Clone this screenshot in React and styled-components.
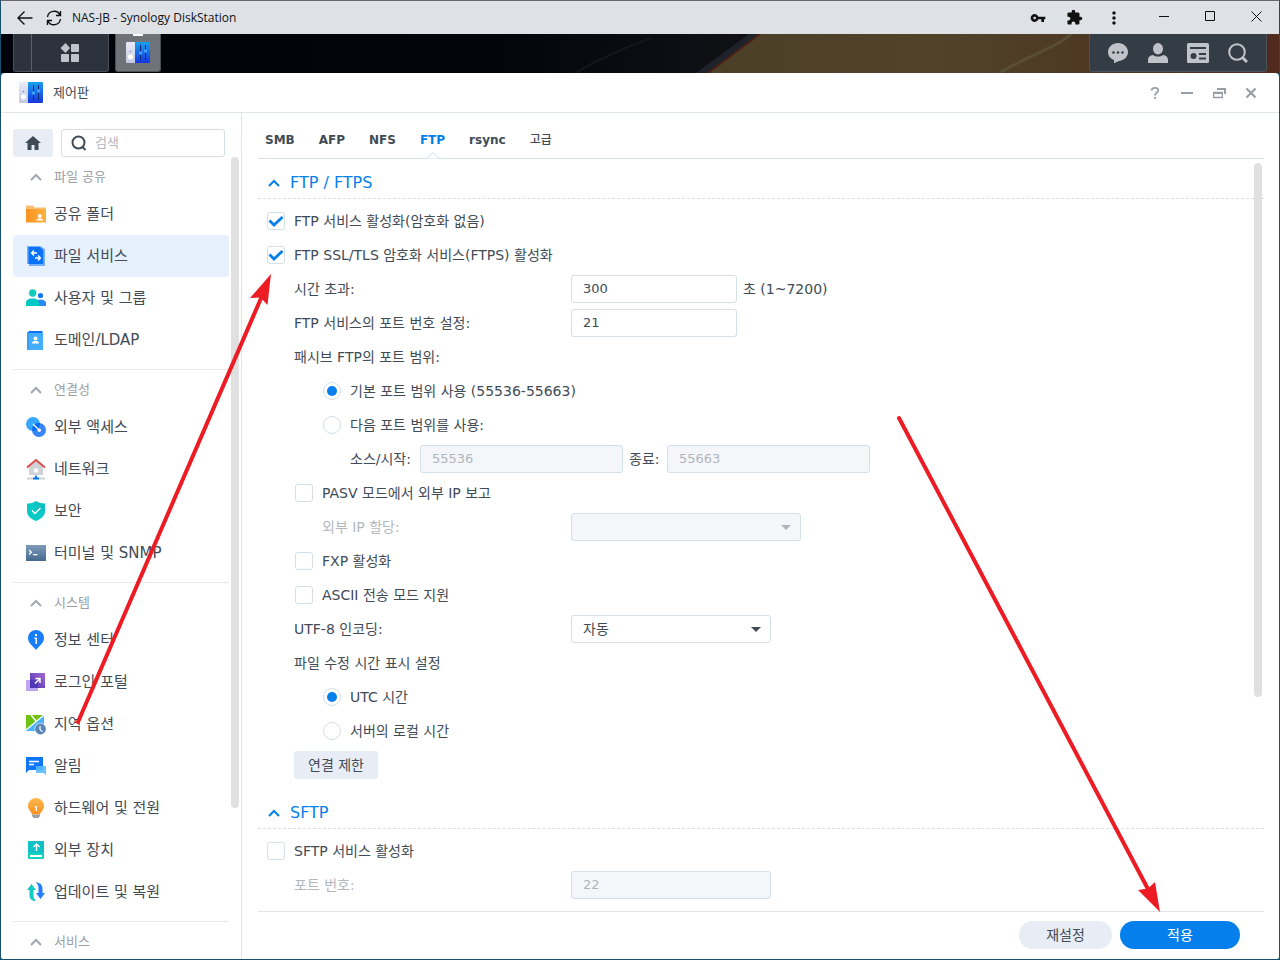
import React, { useState } from "react";
import styled, { createGlobalStyle, css } from "styled-components";
import { MdVpnKey, MdExtension, MdMoreVert } from "react-icons/md";

const GlobalStyle = createGlobalStyle`
  *, *::before, *::after {
    box-sizing: border-box;
  }
  body {
    margin: 0;
    color: #414b55;
    font: 13px/28px "DejaVu Sans", "Noto Sans CJK KR", sans-serif;
  }
  button, input, select {
    margin: 0;
    color: inherit;
    font: inherit;
  }
`;

const Screen = styled.div`
  position: relative;
  display: flex;
  flex-direction: column;
  height: 100vh;
  overflow: hidden;
  border: 1px solid #17506f;
  border-top-color: #66676b;
  background: #17506f;
`;

const PlainButton = styled.button`
  display: flex;
  align-items: center;
  justify-content: center;
  padding: 0;
  border: 0;
  background: none;
`;

/* browser title bar */

const TitleBar = styled.header`
  display: flex;
  flex: none;
  align-items: center;
  height: 33px;
  padding-left: 16px;
  background: #dee1e6;
  color: #111;
`;

const PageTitle = styled.div`
  flex: 1;
  margin-left: 10px;
  font: 12px/32px "Open Sans", sans-serif;
`;

const NavButton = styled(PlainButton)`
  width: 16px;
  height: 32px;
  & + & {
    margin-left: 13px;
  }
`;

const BrowserTools = styled.div`
  display: flex;
  margin-right: 5px;
`;

const BrowserTool = styled(PlainButton)`
  width: ${(p) => p.$width || 36}px;
  height: 32px;
`;

const CaptionButton = styled(PlainButton)`
  width: 46px;
  height: 32px;
  padding-bottom: 3px;
`;

/* DSM task bar */

const TaskBar = styled.nav`
  position: relative;
  display: flex;
  flex: none;
  gap: 6px;
  height: 39px;
  padding: 0 12px;
  background: #02040b;
`;

const Wallpaper = styled.svg`
  position: absolute;
  inset: 0;
  width: 100%;
  height: 100%;
`;

const TaskGroup = styled.div`
  position: relative;
  display: flex;
  height: 38px;
  border: 1px solid #4b5158;
  border-top: 0;
  border-radius: 0 0 3px 3px;
  background: ${(p) => p.$background};
`;

const DesktopToggle = styled(PlainButton)`
  width: 18px;
  border-right: 1px solid #5a6068;
`;

const AppsButton = styled(PlainButton)`
  width: 76px;
`;

const RunningApp = styled(PlainButton)`
  width: 44px;
  &::before {
    position: absolute;
    top: 0;
    width: 10px;
    height: 2px;
    background: #fff;
    content: "";
  }
`;

const Tray = styled(TaskGroup)`
  margin-left: auto;
  padding: 0 8px;
`;

const TrayButton = styled(PlainButton)`
  width: 40px;
`;

/* control panel window */

const Window = styled.main`
  display: flex;
  flex: 1;
  flex-direction: column;
  min-height: 0;
  border-radius: 4px 4px 2px 2px;
  background: #fff;
`;

const WindowHeader = styled.div`
  display: flex;
  flex: none;
  align-items: center;
  height: 40px;
  padding: 0 12px 0 18px;
  border-bottom: 1px solid #dfe6ed;
`;

const WindowTitle = styled.h1`
  flex: 1;
  margin: 0 0 0 10px;
  font-size: 13px;
  font-weight: 400;
`;

const WindowButton = styled(PlainButton)`
  width: 32px;
  height: 32px;
`;

const Columns = styled.div`
  display: flex;
  flex: 1;
  min-height: 0;
`;

const Sidebar = styled.aside`
  position: relative;
  display: flex;
  flex: none;
  flex-direction: column;
  width: 241px;
  padding: 16px 12px 0;
  overflow: hidden;
  border-right: 1px solid #dfe3e8;
`;

const SearchRow = styled.div`
  display: flex;
  flex: none;
  gap: 8px;
  padding-right: 4px;
`;

const HomeButton = styled(PlainButton)`
  flex: none;
  width: 40px;
  height: 28px;
  border-radius: 3px;
  background: #e8ecf4;
`;

const SearchBox = styled.label`
  display: flex;
  flex: 1;
  align-items: center;
  gap: 8px;
  min-width: 0;
  height: 28px;
  padding: 0 9px;
  border: 1px solid #d3dee8;
  border-radius: 3px;
`;

const SearchInput = styled.input`
  flex: 1;
  min-width: 0;
  padding: 0;
  border: 0;
  outline: 0;
  line-height: 24px;
  &::placeholder {
    color: #b4b8bd;
  }
`;

const MenuGroup = styled.section`
  flex: none;
  & + & {
    margin-top: 8px;
    border-top: 1px solid #e6eaef;
  }
`;

const rowLayout = css`
  display: flex;
  align-items: center;
  width: 100%;
  gap: 8px;
  padding: 0 13px;
  border: 0;
  text-align: left;
`;

const GroupHeader = styled.button`
  ${rowLayout}
  height: 36px;
  padding-top: 4px;
  background: none;
  color: #999ea5;
`;

const MenuItem = styled.button`
  ${rowLayout}
  height: 42px;
  border-radius: 4px;
  background: ${(p) => (p.$active ? "#e6f1fd" : "none")};
  font-size: 15px;
`;

const IconBox = styled.span`
  display: flex;
  flex: none;
  justify-content: center;
  width: 20px;
`;

const ScrollThumb = styled.div`
  position: absolute;
  top: ${(p) => p.$top}px;
  right: 2px;
  width: 8px;
  height: ${(p) => p.$length};
  border-radius: 4px;
  background: #e0e0e0;
`;

/* file services page */

const Content = styled.div`
  display: flex;
  flex: 1;
  flex-direction: column;
  min-width: 0;
  padding: 0 15px 0 16px;
`;

const Tabs = styled.div`
  display: flex;
  flex: none;
  gap: 24px;
  height: 46px;
  padding: 0 7px;
  border-bottom: 1px solid #d3dfe9;
`;

const Tab = styled.button`
  position: relative;
  padding: 8px 0 0;
  border: 0;
  background: none;
  color: ${(p) => (p.$active ? "#057feb" : "#414b55")};
  font-size: 12px;
  font-weight: ${(p) => (p.$light ? 500 : 700)};
`;

const TabNotch = styled.svg`
  position: absolute;
  bottom: -1px;
  left: calc(50% - 7px);
`;

const ScrollArea = styled.div`
  position: relative;
  flex: 1;
  min-height: 0;
  padding-top: 9px;
  overflow: hidden;
`;

const Section = styled.section`
  & + & {
    margin-top: 19px;
  }
`;

const SectionTitle = styled.h2`
  margin: 0 0 8px;
  border-bottom: 1px dashed #d3dfe9;
  font-size: 16px;
  font-weight: 400;
`;

const SectionToggle = styled.button`
  display: flex;
  align-items: center;
  gap: 10px;
  width: 100%;
  height: 30px;
  padding: 0 10px;
  border: 0;
  background: none;
  color: #057feb;
`;

const Rows = styled.div`
  display: flex;
  flex-direction: column;
  gap: 6px;
  font-size: 14px;
`;

const Row = styled.div`
  display: flex;
  align-items: center;
  gap: 6px;
  height: 28px;
  padding-left: ${(p) => p.$indent}px;
`;

const FieldLabel = styled.label`
  flex: none;
  width: ${(p) => p.$width}px;
  margin-right: -6px;
  color: ${(p) => (p.$disabled ? "#b3b8be" : "inherit")};
`;

const Choice = styled.label`
  display: flex;
  align-items: center;
  gap: 9px;
`;

const Mark = styled.span`
  position: relative;
  display: flex;
  width: 18px;
  height: 18px;
  svg {
    position: absolute;
    inset: 0;
    pointer-events: none;
  }
`;

const ChoiceInput = styled.input`
  width: 18px;
  height: 18px;
  appearance: none;
  border: 1px solid #d3dfe9;
  border-radius: ${(p) => (p.type === "radio" ? "50%" : "3px")};
  background: #fff;
`;

const field = css`
  height: 28px;
  padding: 0 11px;
  border: 1px solid #d3dfe9;
  border-radius: 3px;
  outline: 0;
  background: #fff;
  &:disabled {
    background: #f4f6fa;
    color: #b0b5bc;
    opacity: 1;
  }
`;

const TextInput = styled.input`
  ${field}
  width: ${(p) => p.$width}px;
  font-size: 13px;
`;

const SelectBox = styled.div`
  position: relative;
  width: ${(p) => p.$width}px;
  height: 28px;
  svg {
    position: absolute;
    top: 12px;
    right: 10px;
    pointer-events: none;
  }
`;

const SelectInput = styled.select`
  ${field}
  width: 100%;
  appearance: none;
  line-height: 24px;
`;

const SmallButton = styled.button`
  height: 28px;
  padding: 0 14px;
  border: 0;
  border-radius: 3px;
  background: #e8ecf4;
`;

const Footer = styled.footer`
  display: flex;
  flex: none;
  justify-content: flex-end;
  gap: 8px;
  padding: 9px 24px 10px;
  border-top: 1px solid #e1e4e8;
`;

const PillButton = styled.button`
  width: ${(p) => (p.$primary ? 120 : 93)}px;
  height: 28px;
  padding: 0;
  border: 0;
  border-radius: 14px;
  background: ${(p) => (p.$primary ? "#057feb" : "#e8ecf4")};
  color: ${(p) => (p.$primary ? "#fff" : "#414b55")};
  font-size: 14px;
`;

const Arrows = styled.svg`
  position: absolute;
  top: -1px;
  left: -1px;
  width: 1280px;
  height: 960px;
  pointer-events: none;
`;

/* icons */

const ChevronUp = ({ color = "#a3a8ae", width = 2 }) => (
  <svg width="12" height="8" viewBox="0 0 12 8" fill="none" stroke={color} strokeWidth={width}>
    <path d="M1 7l5-5 5 5" />
  </svg>
);

const Caret = ({ color }) => (
  <svg width="10" height="5" viewBox="0 0 10 5" fill={color}>
    <path d="M0 0h10L5 5z" />
  </svg>
);

const PanelIcon = ({ id }) => (
  <svg width="24" height="22" viewBox="0 0 24 22">
    <defs>
      <linearGradient id={`${id}b`} x1="0" y1="0" x2="0" y2="1">
        <stop offset="0" stopColor="#17a0ee" />
        <stop offset="1" stopColor="#1736de" />
      </linearGradient>
      <linearGradient id={`${id}w`} x1="0" y1="0" x2="0" y2="1">
        <stop offset="0" stopColor="#e9ebfb" />
        <stop offset="1" stopColor="#c3c8e2" />
      </linearGradient>
    </defs>
    <path d="M1 0h8v21H1a1 1 0 0 1-1-1V1a1 1 0 0 1 1-1z" fill={`url(#${id}w)`} />
    <path d="M9 0h14a1 1 0 0 1 1 1v19a1 1 0 0 1-1 1H9z" fill={`url(#${id}b)`} />
    <circle cx="4.5" cy="9.5" r=".6" fill="#555b78" />
    <circle cx="4.5" cy="14.8" r="2.600" fill="#fff" />
    <path d="M14.500 3v15M19.500 3v15" stroke="#102a78" strokeWidth="1" />
    <circle cx="14.500" cy="11" r="1.700" fill="#44a2ff" />
    <circle cx="19.500" cy="9" r="1.700" fill="#44a2ff" />
  </svg>
);

const menuIcons = {
  folder: (
    <>
      <path d="M0 1.500h7l1.500 2H20V8H0z" fill="#f9bd78" />
      <path d="M0 5h20v13.500H0z" fill="url(#orange)" />
      <circle cx="13.800" cy="12" r="2" fill="#fff" />
      <path d="M10.300 16.500c0-1.500 1.500-2 3.500-2s3.300.5 3.300 2z" fill="#fff" />
    </>
  ),
  file: (
    <>
      <path d="M1 0h13l5 3v17H3V18H1z" fill="#77aefb" />
      <path d="M2.500 1H14l3.200 3v14H2.500z" fill="#0972fb" />
      <path d="M8 4.500L5.500 7 8 9.500M5.500 7H11M12 9.500l2.500 2.500L12 14.500M14.500 12H9" fill="none" stroke="#fff" strokeWidth="1.300" />
    </>
  ),
  users: (
    <>
      <circle cx="14.500" cy="7.500" r="2.600" fill="#1677f5" />
      <path d="M10 18v-3c0-2.500 2-3.500 4.500-3.500S20 12.700 20 15v3z" fill="#2b87fa" />
      <circle cx="6.700" cy="5" r="3.700" fill="#16cbbd" />
      <path d="M0 18v-3c0-3 2-4.500 6.500-4.500S13 12 13 15v3z" fill="#02c8c5" />
    </>
  ),
  domain: (
    <>
      <path d="M2.500 1h14v3h-14z" fill="#0a6ff0" />
      <path d="M2 3h15v17H2z" fill="#45adfd" />
      <path d="M1 2h2v18H1z" fill="#3b9cf8" />
      <circle cx="9.500" cy="8.500" r="1.900" fill="#fff" />
      <path d="M6 13.500c0-2 1.500-2.500 3.500-2.500s3.500.5 3.500 2.500z" fill="#fff" />
    </>
  ),
  access: (
    <>
      <circle cx="7" cy="7" r="7" fill="#36a9fd" />
      <circle cx="13" cy="13" r="7" fill="#3786fb" />
      <path d="M6.500 10.500a7 7 0 0 1 7.500-4.400 7 7 0 0 1-7.700 7.900z" fill="#046cf5" />
      <path d="M7 7l6 6" stroke="#fff" strokeWidth="1.300" />
      <circle cx="13.300" cy="13.300" r="1.700" fill="#fff" />
    </>
  ),
  network: (
    <>
      <path d="M3 7l7-6 7 6v9H3z" fill="#cfd3d7" />
      <path d="M1 8.500L10 1l9 7.500" fill="none" stroke="#d9504d" strokeWidth="2" />
      <rect x="7.800" y="9.500" width="4.400" height="4" rx="1" fill="#fff" />
      <path d="M1 18.500h18v2H1z" fill="#ced2d7" />
      <path d="M7 18.500h2v-2h2v2h2v2H7z" fill="#0878fb" />
    </>
  ),
  shield: (
    <>
      <path d="M10 0c3 2 6 2.500 9 2.500V10c0 5-4 8-9 10-5-2-9-5-9-10V2.500C4 2.500 7 2 10 0z" fill="#07c9c6" />
      <path d="M10 0c3 2 6 2.500 9 2.500V10H10z" fill="#13b9bb" opacity=".5" />
      <path d="M6 9.500l3 3 5.500-5.500" fill="none" stroke="#fff" strokeWidth="1.500" />
    </>
  ),
  terminal: (
    <>
      <path d="M0 2h20v16H0z" fill="url(#steel)" />
      <path d="M3 7l2.500 2.200L3 11.500M7 11.700h4.500" fill="none" stroke="#fff" strokeWidth="1.200" />
    </>
  ),
  info: (
    <>
      <path d="M10 0a8 8 0 0 1 8 8c0 5-5 8-8 12C7 16 2 13 2 8a8 8 0 0 1 8-8z" fill="#177dfc" />
      <path d="M9 4h2v2H9zM8.500 7.500H11V14H9.500V9h-1z" fill="#fff" />
    </>
  ),
  portal: (
    <>
      <path d="M0 8h12v11H0z" fill="#bda5f2" />
      <path d="M4 1h15v15H4z" fill="url(#violet)" />
      <path d="M4 8h8v8H4z" fill="#4a36b5" opacity=".7" />
      <path d="M9 11.500L13.500 7M9.500 6.500H14V11" fill="none" stroke="#fff" strokeWidth="1.400" />
    </>
  ),
  region: (
    <>
      <path d="M0 1h18v16H0z" fill="#48b3fb" />
      <path d="M0 1h17L0 16z" fill="#6ec310" />
      <path d="M18 1L0 16M5 1l5 6" fill="none" stroke="#fff" strokeWidth="1.300" />
      <circle cx="14.500" cy="15" r="6" fill="#fff" />
      <circle cx="14.500" cy="15" r="5.400" fill="#5884b4" />
      <path d="M14 12v3.300l2.500 2.500" fill="none" stroke="#fff" strokeWidth="1.200" />
    </>
  ),
  notice: (
    <>
      <path d="M0 1h17v13H3l-3 3z" fill="#0d76fb" />
      <path d="M3 5.500h10M3 8.500h5" stroke="#fff" strokeWidth="1.300" />
      <path d="M10 10h10v9l-2.500-2H10z" fill="#58b9fd" opacity=".9" />
    </>
  ),
  bulb: (
    <>
      <path d="M10 0a8 8 0 0 1 8 8c0 4-3.500 5.500-4 8.500H6C5.500 13.500 2 12 2 8a8 8 0 0 1 8-8z" fill="url(#bulbfill)" />
      <path d="M6 16.500h8v1.500l-1.500 2h-5L6 18z" fill="#9da2a8" />
      <path d="M8.800 8.600h1.500V13" fill="none" stroke="#fff" strokeWidth="1.300" />
    </>
  ),
  device: (
    <>
      <path d="M2 1h16v12H2z" fill="#10c2c5" />
      <path d="M2 13h16v6H2z" fill="#10d3c5" />
      <path d="M10.500 11V4.500M7.500 7l3-3 3 3" fill="none" stroke="#fff" strokeWidth="1.400" />
      <path d="M4 15h12v2H4z" fill="#fff" />
    </>
  ),
  update: (
    <>
      <path d="M5.500 2L10 8H7.500v5c0 3 1 4.500 2.500 6-4 0-6.500-2-6.500-6V8H1z" fill="#12c8c4" />
      <path d="M14.500 17L19 11h-2.500V7c0-4-2-6.500-7-6.500 2 1 3 3 3 5.500v5H10z" fill="#237efb" />
    </>
  ),
};

const MenuIcon = ({ name }) => (
  <svg width="20" height="20" viewBox="0 0 20 20" overflow="visible">
    <defs>
      <linearGradient id="orange">
        <stop offset="0" stopColor="#fb9223" />
        <stop offset="1" stopColor="#fdb33b" />
      </linearGradient>
      <linearGradient id="steel" x1="0" y1="0" x2="0" y2="1">
        <stop offset="0" stopColor="#7e9bb9" />
        <stop offset="1" stopColor="#46688d" />
      </linearGradient>
      <linearGradient id="violet" x1="0" y1="1" x2="1" y2="0">
        <stop offset="0" stopColor="#4b31af" />
        <stop offset="1" stopColor="#a36ad3" />
      </linearGradient>
      <linearGradient id="bulbfill" x1="0" y1="0" x2="0" y2="1">
        <stop offset="0" stopColor="#fbba51" />
        <stop offset="1" stopColor="#fb8f1f" />
      </linearGradient>
    </defs>
    {menuIcons[name]}
  </svg>
);

const menu = [
  {
    title: "파일 공유",
    items: [
      ["folder", "공유 폴더"],
      ["file", "파일 서비스"],
      ["users", "사용자 및 그룹"],
      ["domain", "도메인/LDAP"],
    ],
  },
  {
    title: "연결성",
    items: [
      ["access", "외부 액세스"],
      ["network", "네트워크"],
      ["shield", "보안"],
      ["terminal", "터미널 및 SNMP"],
    ],
  },
  {
    title: "시스템",
    items: [
      ["info", "정보 센터"],
      ["portal", "로그인 포털"],
      ["region", "지역 옵션"],
      ["notice", "알림"],
      ["bulb", "하드웨어 및 전원"],
      ["device", "외부 장치"],
      ["update", "업데이트 및 복원"],
    ],
  },
  { title: "서비스", items: [] },
];

const tabs = ["SMB", "AFP", "NFS", "FTP", "rsync", "고급"];

function Check({ indent, children, defaultChecked = false }) {
  const [checked, setChecked] = useState(defaultChecked);
  return (
    <Row $indent={indent}>
      <Choice>
        <Mark>
          <ChoiceInput type="checkbox" checked={checked} onChange={() => setChecked(!checked)} />
          {checked && (
            <svg width="18" height="18" viewBox="0 0 18 18" fill="none" stroke="#057feb" strokeWidth="2.800">
              <path d="M2.500 8.500l4.500 4.500L15.500 5" />
            </svg>
          )}
        </Mark>
        {children}
      </Choice>
    </Row>
  );
}

function Radio({ name, value, current, onPick, children }) {
  return (
    <Row $indent={65}>
      <Choice>
        <Mark>
          <ChoiceInput type="radio" name={name} checked={current === value} onChange={() => onPick(value)} />
          {current === value && (
            <svg width="18" height="18" viewBox="0 0 18 18" fill="#057feb">
              <circle cx="9" cy="9" r="5" />
            </svg>
          )}
        </Mark>
        {children}
      </Choice>
    </Row>
  );
}

function FormSection({ title, children }) {
  return (
    <Section>
      <SectionTitle>
        <SectionToggle>
          <ChevronUp color="#057feb" />
          {title}
        </SectionToggle>
      </SectionTitle>
      <Rows>{children}</Rows>
    </Section>
  );
}

function BrowserBar() {
  return (
    <TitleBar>
      <NavButton aria-label="Back">
        <svg width="16" height="16" viewBox="0 0 16 16" fill="none" stroke="#111" strokeWidth="1.400">
          <path d="M15.500 8H1M7.500 1.500L1 8l6.500 6.500" />
        </svg>
      </NavButton>
      <NavButton aria-label="Reload">
        <svg width="16" height="16" viewBox="0 0 16 16" fill="none" stroke="#111" strokeWidth="1.400">
          <path d="M1.500 7A6.600 6.600 0 0 1 14 5M14.500 1v4.500H10M14.500 9A6.600 6.600 0 0 1 2 11M1.500 15v-4.500H6" />
        </svg>
      </NavButton>
      <PageTitle>NAS-JB - Synology DiskStation</PageTitle>
      <BrowserTools>
        <BrowserTool aria-label="Passwords">
          <MdVpnKey size={16} />
        </BrowserTool>
        <BrowserTool aria-label="Extensions">
          <MdExtension size={17} />
        </BrowserTool>
        <BrowserTool aria-label="More" $width={44}>
          <MdMoreVert size={20} />
        </BrowserTool>
      </BrowserTools>
      <CaptionButton aria-label="Minimize">
        <svg width="10" height="10" stroke="#111">
          <path d="M0 5.500h10" />
        </svg>
      </CaptionButton>
      <CaptionButton aria-label="Maximize">
        <svg width="10" height="10" stroke="#111" fill="none">
          <path d="M.5.5h9v9h-9z" />
        </svg>
      </CaptionButton>
      <CaptionButton aria-label="Close">
        <svg width="11" height="11" stroke="#111">
          <path d="M.5.5l10 10M10.500.5l-10 10" />
        </svg>
      </CaptionButton>
    </TitleBar>
  );
}

function DesktopBar() {
  return (
    <TaskBar>
      <Wallpaper viewBox="0 0 1278 39" preserveAspectRatio="xMaxYMid slice">
        <defs>
          <linearGradient id="night">
            <stop offset="0" stopColor="#01030b" />
            <stop offset=".65" stopColor="#02050c" />
            <stop offset="1" stopColor="#121216" />
          </linearGradient>
          <linearGradient id="planet">
            <stop offset="0" stopColor="#4c3f27" />
            <stop offset=".4" stopColor="#50432a" />
            <stop offset=".65" stopColor="#4e3925" />
            <stop offset="1" stopColor="#512a1e" />
          </linearGradient>
        </defs>
        <path d="M0 0h762v39H0z" fill="url(#night)" />
        <path d="M748 0h12l-53 39h-12z" fill="#1e222a" />
        <path d="M759 0h519v39H707z" fill="url(#planet)" />
        <path d="M759 0l-52 39" stroke="#4c2014" strokeWidth="2" />
        <path d="M1070 0c-12 12-35 18-72 39" stroke="#646043" strokeWidth="3" fill="none" opacity=".5" />
        <path d="M650 4c-28 10-50 20-76 35" stroke="#14171d" strokeWidth="2" fill="none" />
      </Wallpaper>
      <TaskGroup $background="#2c333d">
        <DesktopToggle aria-label="Show desktop" />
        <AppsButton aria-label="Main menu">
          <svg width="20" height="20" viewBox="0 0 20 20" fill="#c0c5cb">
            <path d="M5.500 0l4.500 5-4.500 5L.5 5z" />
            <rect x="11" y="1" width="8" height="8" rx="1" />
            <rect x="1" y="11" width="8" height="8" rx="1" />
            <rect x="11" y="11" width="8" height="8" rx="1" />
          </svg>
        </AppsButton>
      </TaskGroup>
      <TaskGroup $background="#6d7379">
        <RunningApp aria-label="제어판">
          <PanelIcon id="task" />
        </RunningApp>
      </TaskGroup>
      <Tray $background="#343c45">
        <TrayButton aria-label="Chat">
          <svg width="20" height="20" viewBox="0 0 20 20" fill="#c0c4ca">
            <path d="M10 0c5.600 0 10 4 10 9s-4.400 8.500-9 9l-5 2.200V17C2.500 15.500 0 13 0 9c0-5 4.400-9 10-9z" />
            <g fill="#343c45">
              <circle cx="5.500" cy="9.500" r="1.300" />
              <circle cx="10" cy="9.500" r="1.300" />
              <circle cx="14.500" cy="9.500" r="1.300" />
            </g>
          </svg>
        </TrayButton>
        <TrayButton aria-label="Account">
          <svg width="20" height="20" viewBox="0 0 20 20" fill="#c0c4ca">
            <ellipse cx="10" cy="5.700" rx="5" ry="5.700" />
            <path d="M0 20v-3c0-3 2-4.500 5-5 1.500 1 3 1.500 5 1.500s3.500-.5 5-1.500c3 .5 5 2 5 5v3z" />
          </svg>
        </TrayButton>
        <TrayButton aria-label="Widgets">
          <svg width="22" height="20" viewBox="0 0 22 20">
            <rect width="22" height="20" rx="1.500" fill="#c0c4ca" />
            <path d="M3 5h16M12 11h7M12 15.500h7" stroke="#343c45" strokeWidth="2" />
            <circle cx="6.500" cy="13" r="3" fill="#343c45" />
          </svg>
        </TrayButton>
        <TrayButton aria-label="Search">
          <svg width="20" height="20" viewBox="0 0 20 20" fill="none" stroke="#c0c4ca">
            <circle cx="9" cy="9" r="7.800" strokeWidth="2" />
            <path d="M14 14l5 5" strokeWidth="3" />
          </svg>
        </TrayButton>
      </Tray>
    </TaskBar>
  );
}

function SideMenu() {
  return (
    <Sidebar>
      <SearchRow>
        <HomeButton aria-label="Home">
          <svg width="16" height="14" viewBox="0 0 16 14" fill="#414b55">
            <path d="M8 0l8 7h-2.500v7h-4V9h-3v5h-4V7H0z" />
          </svg>
        </HomeButton>
        <SearchBox>
          <svg width="16" height="16" viewBox="0 0 16 16" fill="none" stroke="#414b55" strokeWidth="2">
            <circle cx="7.500" cy="7.500" r="6" />
            <path d="M11 11.500l3.500 3.500" />
          </svg>
          <SearchInput placeholder="검색" aria-label="검색" />
        </SearchBox>
      </SearchRow>
      {menu.map((group) => (
        <MenuGroup key={group.title}>
          <GroupHeader>
            <IconBox>
              <ChevronUp />
            </IconBox>
            {group.title}
          </GroupHeader>
          {group.items.map(([icon, label]) => (
            <MenuItem key={label} $active={icon === "file"}>
              <IconBox>
                <MenuIcon name={icon} />
              </IconBox>
              {label}
            </MenuItem>
          ))}
        </MenuGroup>
      ))}
      <ScrollThumb $top={44} $length="77%" />
    </Sidebar>
  );
}

function FtpForm() {
  const [range, setRange] = useState("default");
  const [clock, setClock] = useState("utc");

  return (
    <ScrollArea>
      <FormSection title="FTP / FTPS">
        <Check indent={9} defaultChecked>
          FTP 서비스 활성화(암호화 없음)
        </Check>
        <Check indent={9} defaultChecked>
          FTP SSL/TLS 암호화 서비스(FTPS) 활성화
        </Check>
        <Row $indent={36}>
          <FieldLabel htmlFor="timeout" $width={277}>시간 초과:</FieldLabel>
          <TextInput id="timeout" defaultValue="300" $width={166} />
          <span>초 (1~7200)</span>
        </Row>
        <Row $indent={36}>
          <FieldLabel htmlFor="port" $width={277}>FTP 서비스의 포트 번호 설정:</FieldLabel>
          <TextInput id="port" defaultValue="21" $width={166} />
        </Row>
        <Row $indent={36}>패시브 FTP의 포트 범위:</Row>
        <Radio name="range" value="default" current={range} onPick={setRange}>
          기본 포트 범위 사용 (55536-55663)
        </Radio>
        <Radio name="range" value="custom" current={range} onPick={setRange}>
          다음 포트 범위를 사용:
        </Radio>
        <Row $indent={92}>
          <FieldLabel htmlFor="from" $width={70}>소스/시작:</FieldLabel>
          <TextInput id="from" defaultValue="55536" disabled={range === "default"} $width={203} />
          <FieldLabel htmlFor="to" $width={38}>종료:</FieldLabel>
          <TextInput id="to" defaultValue="55663" disabled={range === "default"} $width={203} />
        </Row>
        <Check indent={37}>PASV 모드에서 외부 IP 보고</Check>
        <Row $indent={64}>
          <FieldLabel htmlFor="external" $width={249} $disabled>외부 IP 할당:</FieldLabel>
          <SelectBox $width={230}>
            <SelectInput id="external" disabled />
            <Caret color="#b0b5bc" />
          </SelectBox>
        </Row>
        <Check indent={37}>FXP 활성화</Check>
        <Check indent={37}>ASCII 전송 모드 지원</Check>
        <Row $indent={36}>
          <FieldLabel htmlFor="encoding" $width={277}>UTF-8 인코딩:</FieldLabel>
          <SelectBox $width={200}>
            <SelectInput id="encoding">
              <option>자동</option>
            </SelectInput>
            <Caret color="#414b55" />
          </SelectBox>
        </Row>
        <Row $indent={36}>파일 수정 시간 표시 설정</Row>
        <Radio name="clock" value="utc" current={clock} onPick={setClock}>
          UTC 시간
        </Radio>
        <Radio name="clock" value="local" current={clock} onPick={setClock}>
          서버의 로컬 시간
        </Radio>
        <Row $indent={36}>
          <SmallButton>연결 제한</SmallButton>
        </Row>
      </FormSection>
      <FormSection title="SFTP">
        <Check indent={9}>SFTP 서비스 활성화</Check>
        <Row $indent={36}>
          <FieldLabel htmlFor="sftp" $width={277} $disabled>포트 번호:</FieldLabel>
          <TextInput id="sftp" defaultValue="22" disabled $width={200} />
        </Row>
      </FormSection>
      <ScrollThumb $top={4} $length="71%" />
    </ScrollArea>
  );
}

function App() {
  return (
    <Screen>
      <GlobalStyle />
      <BrowserBar />
      <DesktopBar />
      <Window>
        <WindowHeader>
          <PanelIcon id="head" />
          <WindowTitle>제어판</WindowTitle>
          <WindowButton aria-label="Help">
            <svg width="10" height="12" viewBox="0 0 10 12" fill="none" stroke="#999ea6" strokeWidth="1.800">
              <path d="M1.500 3.500C1.700 1.800 3 .9 5 .9s3.300 1 3.300 2.600C8.300 5.500 5 5.500 5 8.500M5 10v2" />
            </svg>
          </WindowButton>
          <WindowButton aria-label="Minimize">
            <svg width="12" height="12" stroke="#999ea6" strokeWidth="2">
              <path d="M0 6h12" />
            </svg>
          </WindowButton>
          <WindowButton aria-label="Restore">
            <svg width="13" height="12" viewBox="0 0 13 12" fill="none" stroke="#999ea6">
              <path d="M4 2h8v5" strokeWidth="2" />
              <path d="M.7 5.500h8.600v5H.7z" strokeWidth="1.300" />
              <path d="M0 6h10" strokeWidth="2" />
            </svg>
          </WindowButton>
          <WindowButton aria-label="Close">
            <svg width="12" height="12" stroke="#999ea6" strokeWidth="2.200">
              <path d="M1.500 1.500l9 9M10.500 1.500l-9 9" />
            </svg>
          </WindowButton>
        </WindowHeader>
        <Columns>
          <SideMenu />
          <Content>
            <Tabs role="tablist">
              {tabs.map((tab) => (
                <Tab key={tab} role="tab" aria-selected={tab === "FTP"} $active={tab === "FTP"} $light={tab === "고급"}>
                  {tab}
                  {tab === "FTP" && (
                    <TabNotch width="14" height="7" viewBox="0 0 14 7" fill="#fff" stroke="#d3dfe9">
                      <path d="M.5 6.500L7 .7l6.500 5.800" />
                    </TabNotch>
                  )}
                </Tab>
              ))}
            </Tabs>
            <FtpForm />
            <Footer>
              <PillButton>재설정</PillButton>
              <PillButton $primary>적용</PillButton>
            </Footer>
          </Content>
        </Columns>
      </Window>
      <Arrows viewBox="0 0 1280 960" fill="#ed1c24">
        <path d="M78 722L262 296M899 418l250 473" stroke="#ed1c24" strokeWidth="4" strokeLinecap="round" />
        <path d="M271 274l-21 24 10.500-.5 7 7.500z" />
        <path d="M1160 912l-22-22 10-1.500 7-6.500z" />
      </Arrows>
    </Screen>
  );
}

export default App;
